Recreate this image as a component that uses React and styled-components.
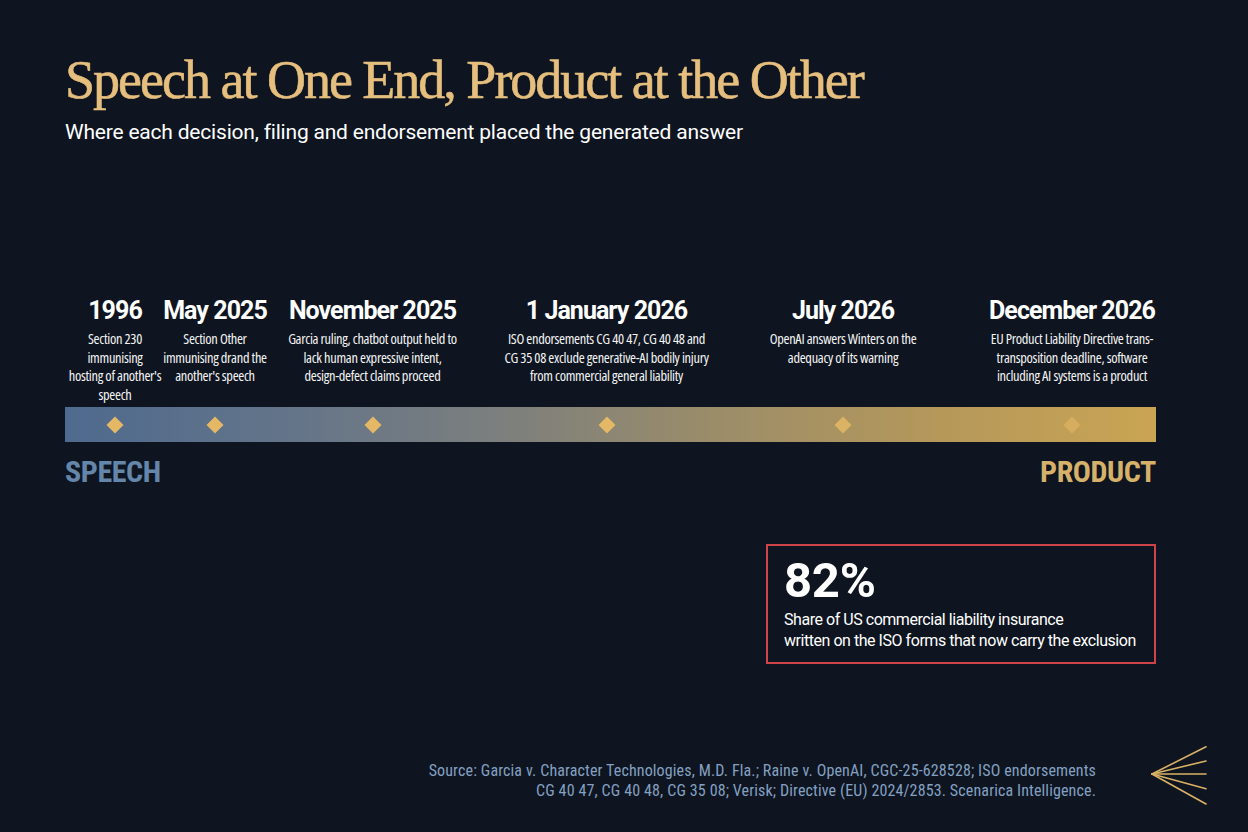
import React from "react";
import styled, { createGlobalStyle } from "styled-components";

const GlobalStyle = createGlobalStyle`
  html, body { margin: 0; padding: 0; background: #0e1520; }
  body { font-family: "Roboto", "Liberation Sans", sans-serif; color: #ffffff; }
  * { box-sizing: border-box; }
`;

const COLS = "100px 100px 215px 253px 220px 238px";

const Page = styled.div`
  width: 1248px;
  height: 832px;
  overflow: hidden;
  background: #0e1520;
  padding: 51px 41px 0 65px;
  display: flex;
  flex-direction: column;
`;

const Content = styled.div`
  width: 1091px;
  display: flex;
  flex-direction: column;
`;

const Title = styled.h1`
  margin: 0;
  font-family: "Liberation Serif", "DejaVu Serif", serif;
  font-weight: 400;
  font-size: 54px;
  line-height: 59.4px;
  letter-spacing: -2px;
  color: #e6bf7e;
  -webkit-text-stroke: 0.6px #e6bf7e;
  white-space: nowrap;
`;

const Subtitle = styled.p`
  margin: 9px 0 0;
  font-family: "Roboto", "Liberation Sans", sans-serif;
  font-size: 21px;
  line-height: 26px;
  letter-spacing: -0.2px;
  color: #ffffff;
  white-space: nowrap;
`;

const Events = styled.div`
  margin-top: 151px;
  display: grid;
  grid-template-columns: ${COLS};
  align-items: start;
`;

const Event = styled.div`
  display: flex;
  flex-direction: column;
  align-items: center;
  text-align: center;
`;

const EventDate = styled.div`
  font-family: "Roboto", "Liberation Sans", sans-serif;
  font-weight: 700;
  font-size: 25px;
  line-height: 30px;
  letter-spacing: -0.95px;
  white-space: nowrap;
  color: #ffffff;
`;

const EventText = styled.div`
  margin-top: 4px;
  font-family: "Open Sans", "Roboto", sans-serif;
  font-stretch: 75%;
  font-weight: 500;
  font-size: 14.4px;
  line-height: 18.5px;
  letter-spacing: -0.3px;
  white-space: nowrap;
  color: #f4f4f4;
`;

const Bar = styled.div`
  margin-top: 3px;
  height: 35px;
  width: 1091px;
  background: linear-gradient(
    90deg,
    #4e6a8e 0%,
    #637489 20%,
    #7c7f7d 40%,
    #9c8d69 60%,
    #b5985a 80%,
    #c9a453 100%
  );
  display: grid;
  grid-template-columns: ${COLS};
  align-items: center;
`;

const MarkerCell = styled.div`
  display: flex;
  justify-content: center;
  align-items: center;
`;

const Diamond = styled.span`
  width: 12px;
  height: 12px;
  background: #e4b865;
  transform: rotate(45deg);
  opacity: ${(p) => p.$fade};
`;

const Ends = styled.div`
  margin-top: 15px;
  display: flex;
  justify-content: space-between;
`;

const EndLabel = styled.div`
  font-family: "Roboto", "Liberation Sans", sans-serif;
  font-stretch: 75%;
  font-weight: 700;
  font-size: 30px;
  line-height: 30px;
  letter-spacing: -0.4px;
  color: ${(p) => p.$color};
`;

const Callout = styled.div`
  align-self: flex-end;
  margin-top: 57px;
  width: 390px;
  border: 2px solid #cf434b;
  padding: 10px 16px 11px;
  display: flex;
  flex-direction: column;
`;

const Figure = styled.div`
  font-family: "Roboto", "Liberation Sans", sans-serif;
  font-weight: 700;
  font-size: 49px;
  line-height: 49px;
  letter-spacing: -0.3px;
  color: #ffffff;
`;

const CalloutText = styled.div`
  margin-top: 4px;
  font-family: "Roboto", "Liberation Sans", sans-serif;
  font-stretch: 88%;
  font-size: 16px;
  line-height: 21px;
  letter-spacing: -0.46px;
  color: #ffffff;
  white-space: nowrap;
`;

const Footer = styled.div`
  margin-top: 82px;
  display: flex;
  justify-content: flex-end;
  align-items: center;
  gap: 55px;
`;

const Source = styled.div`
  font-family: "Roboto", "Liberation Sans", sans-serif;
  font-stretch: 75%;
  font-size: 16px;
  line-height: 20.5px;
  letter-spacing: 0.13px;
  color: #84a0c2;
  text-align: right;
  white-space: nowrap;
  margin-top: 10px;
`;

const Logo = () => (
  <svg width="56" height="60" viewBox="0 0 56 60" fill="none">
    <g stroke="#d9b165" strokeWidth="1.6" strokeLinecap="round">
      <line x1="1" y1="28" x2="55" y2="0.8" />
      <line x1="1" y1="28" x2="55" y2="15" />
      <line x1="1" y1="28" x2="55" y2="28" />
      <line x1="1" y1="28" x2="55" y2="42.7" />
      <line x1="1" y1="28" x2="55" y2="58" />
    </g>
  </svg>
);

const events = [
  {
    date: "1996",
    lines: ["Section 230", "immunising", "hosting of another's", "speech"],
  },
  {
    date: "May 2025",
    lines: ["Section Other", "immunising drand the", "another's speech"],
  },
  {
    date: "November 2025",
    lines: [
      "Garcia ruling, chatbot output held to",
      "lack human expressive intent,",
      "design-defect claims proceed",
    ],
  },
  {
    date: "1 January 2026",
    lines: [
      "ISO endorsements CG 40 47, CG 40 48 and",
      "CG 35 08 exclude generative-AI bodily injury",
      "from commercial general liability",
    ],
  },
  {
    date: "July 2026",
    lines: ["OpenAI answers Winters on the", "adequacy of its warning"],
  },
  {
    date: "December 2026",
    lines: [
      "EU Product Liability Directive trans-",
      "transposition deadline, software",
      "including AI systems is a product",
    ],
  },
];

const fades = [1, 1, 1, 1, 0.85, 0.6];

export default function App() {
  return (
    <>
      <GlobalStyle />
      <Page>
        <Content>
          <Title>Speech at One End, Product at the Other</Title>
          <Subtitle>
            Where each decision, filing and endorsement placed the generated answer
          </Subtitle>

          <Events>
            {events.map((e) => (
              <Event key={e.date}>
                <EventDate>{e.date}</EventDate>
                <EventText>
                  {e.lines.map((l, i) => (
                    <div key={i}>{l}</div>
                  ))}
                </EventText>
              </Event>
            ))}
          </Events>

          <Bar>
            {events.map((e, i) => (
              <MarkerCell key={e.date}>
                <Diamond $fade={fades[i]} />
              </MarkerCell>
            ))}
          </Bar>

          <Ends>
            <EndLabel $color="#6486ab">SPEECH</EndLabel>
            <EndLabel $color="#d5b16a">PRODUCT</EndLabel>
          </Ends>

          <Callout>
            <Figure>82%</Figure>
            <CalloutText>
              Share of US commercial liability insurance
              <br />
              written on the ISO forms that now carry the exclusion
            </CalloutText>
          </Callout>
        </Content>

        <Footer>
          <Source>
            Source: Garcia v. Character Technologies, M.D. Fla.; Raine v. OpenAI, CGC-25-628528; ISO endorsements
            <br />
            CG 40 47, CG 40 48, CG 35 08; Verisk; Directive (EU) 2024/2853. Scenarica Intelligence.
          </Source>
          <Logo />
        </Footer>
      </Page>
    </>
  );
}
